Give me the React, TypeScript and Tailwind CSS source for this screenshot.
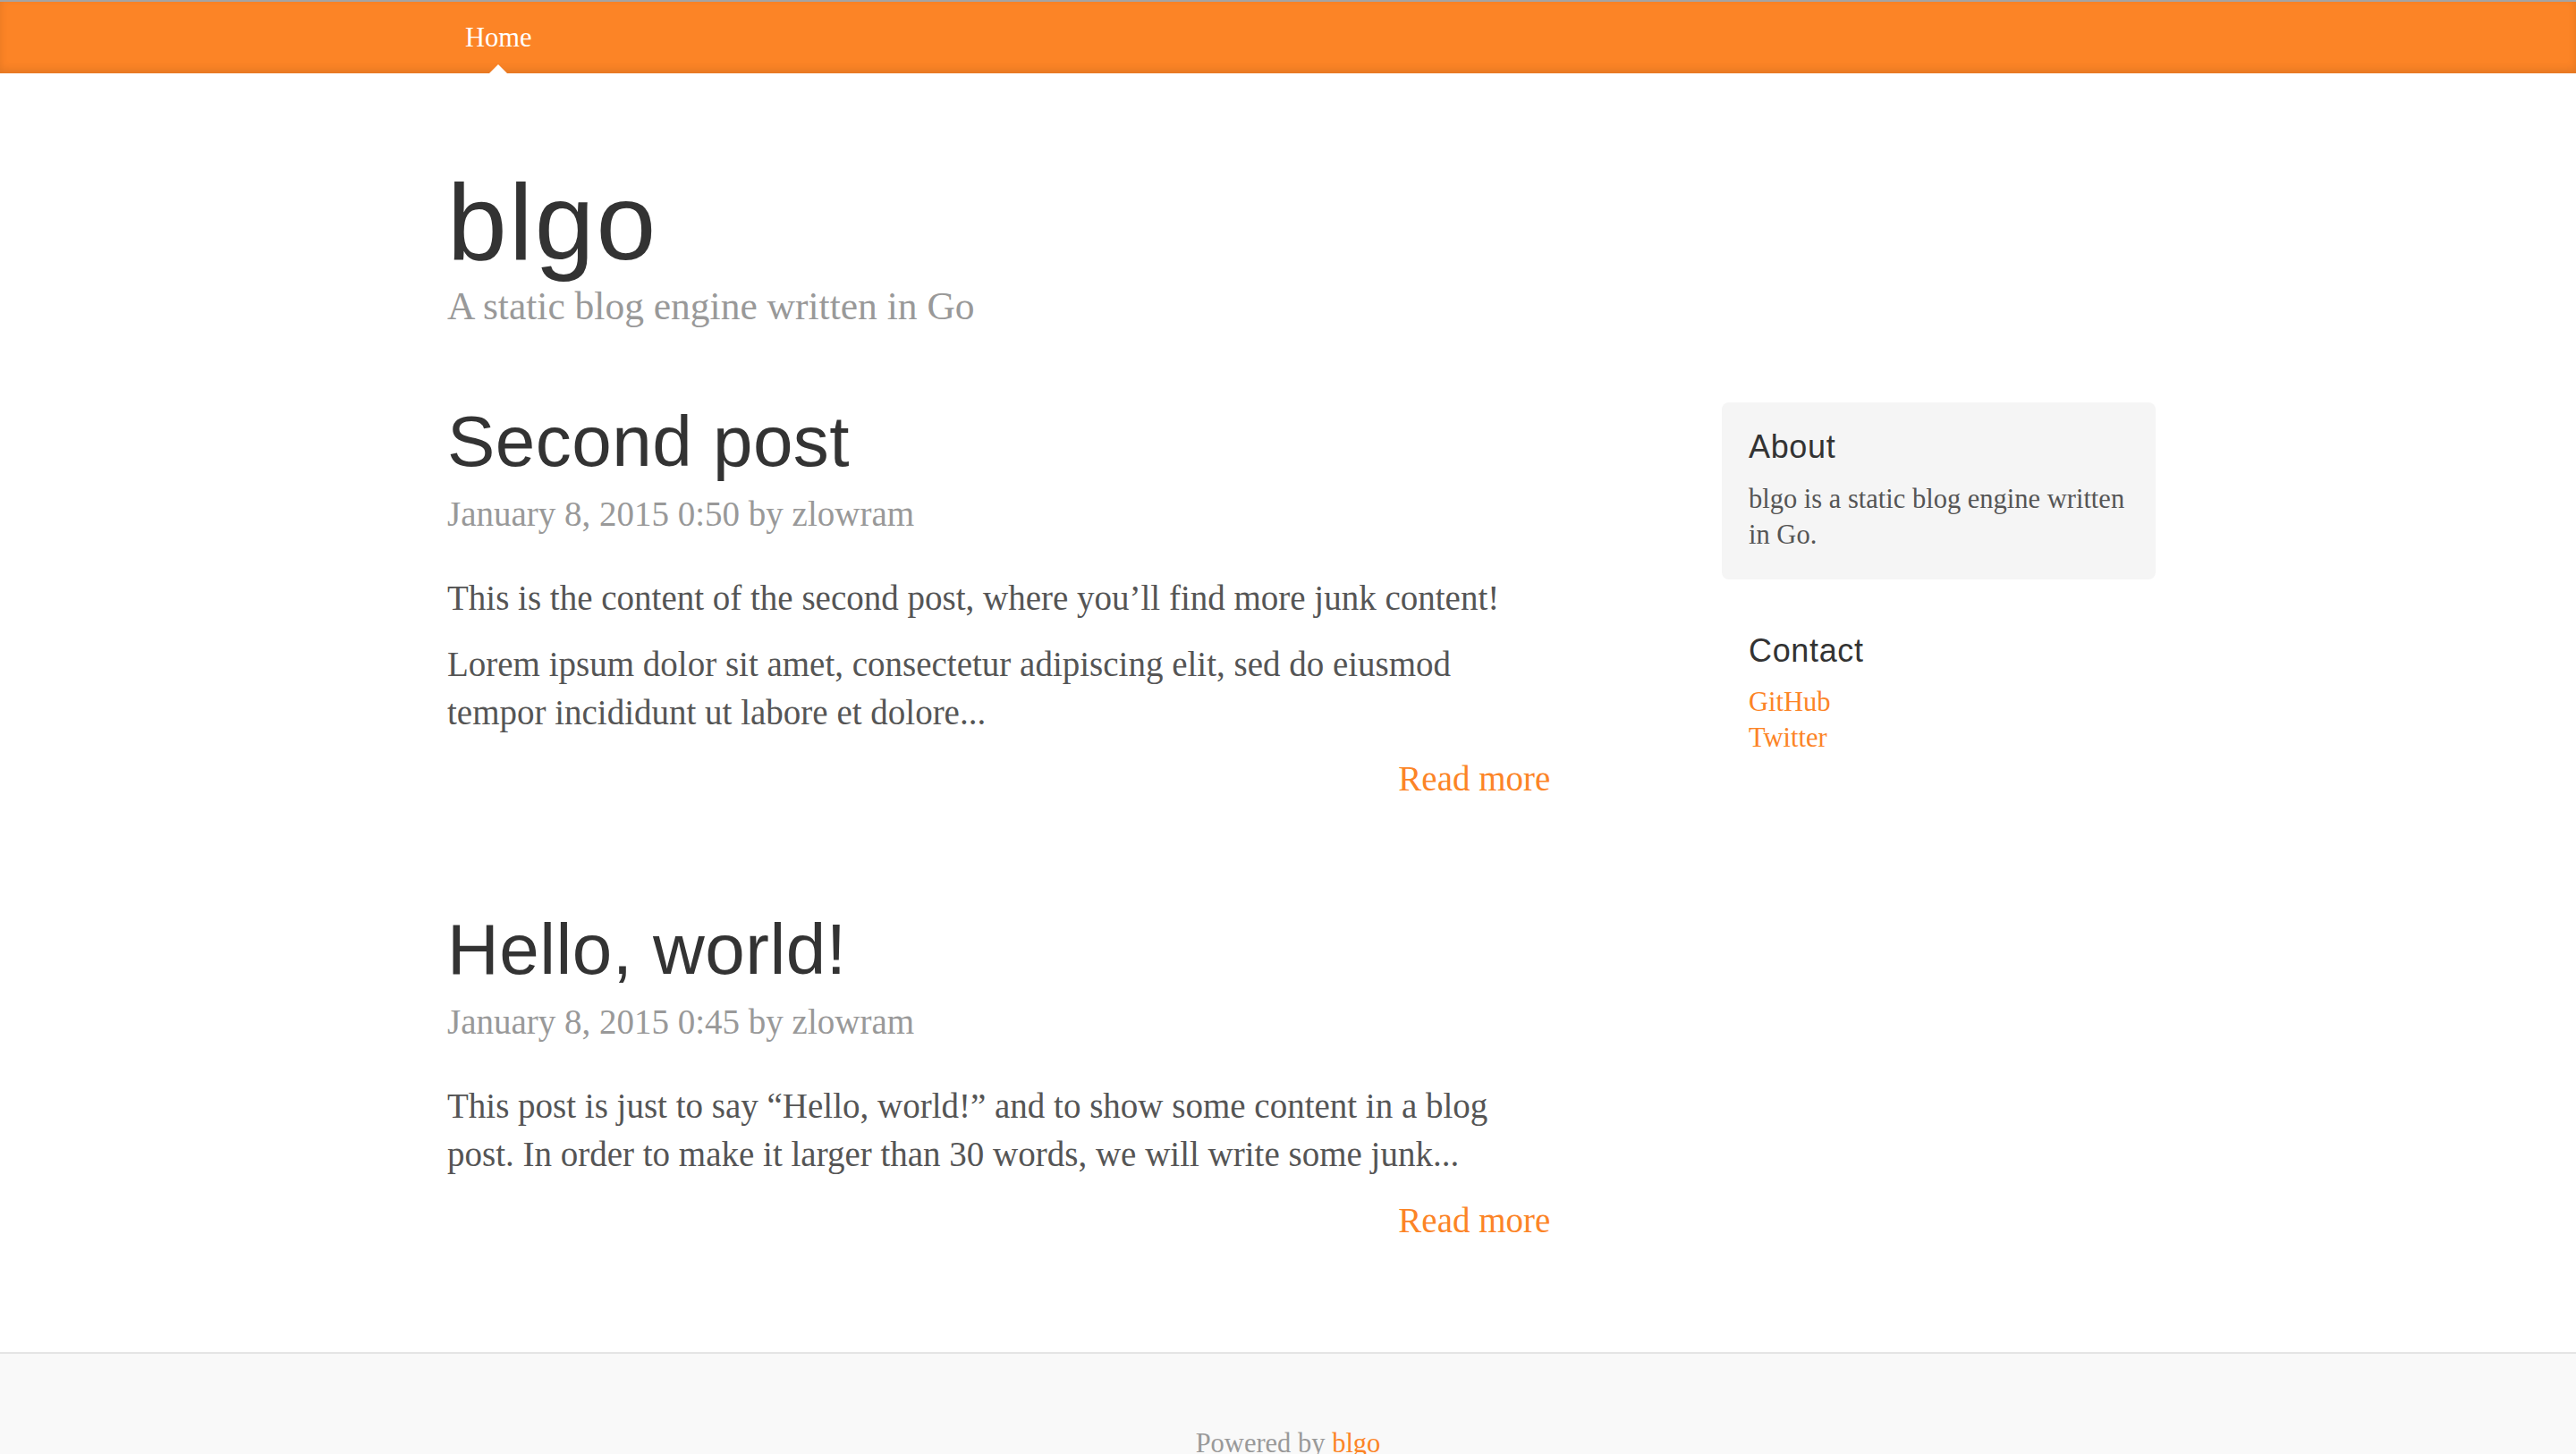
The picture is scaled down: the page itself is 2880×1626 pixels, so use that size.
import React from 'react';

type Post = {
  title: string;
  meta: string;
  paragraphs: React.ReactNode[];
};

const posts: Post[] = [
  {
    title: 'Second post',
    meta: 'January 8, 2015 0:50 by zlowram',
    paragraphs: [
      'This is the content of the second post, where you’ll find more junk content!',
      <>
        Lorem ipsum dolor sit amet, consectetur adipiscing elit, sed do eiusmod
        <br />
        tempor incididunt ut labore et dolore...
      </>,
    ],
  },
  {
    title: 'Hello, world!',
    meta: 'January 8, 2015 0:45 by zlowram',
    paragraphs: [
      <>
        This post is just to say “Hello, world!” and to show some content in a blog
        <br />
        post. In order to make it larger than 30 words, we will write some junk...
      </>,
    ],
  },
];

const BlogPost: React.FC<{ post: Post }> = ({ post }) => (
  <div className="mb-[120px]">
    <h2 className="mb-[10px] font-['Liberation_Sans',Arial,sans-serif] text-[80px] leading-[88px] tracking-[0.006em] text-[#333]">
      {post.title}
    </h2>
    <p className="mb-[40px] text-[#999]">{post.meta}</p>
    {post.paragraphs.map((p, i) => (
      <p key={i} className="mb-[20px]">
        {p}
      </p>
    ))}
    <p className="text-right">
      <a href="#" className="text-[#fc8426]">
        Read more
      </a>
    </p>
  </div>
);

export default function App() {
  return (
    <div className="min-h-screen bg-white font-['Liberation_Serif','Times_New_Roman',serif] text-[#555]">
      {/* masthead */}
      <div className="h-[2px] bg-[#a4a4a4]" />
      <div className="bg-[#fc8426] shadow-[inset_0_-4px_10px_rgba(0,0,0,0.1)]">
        <nav className="mx-auto w-[1940px] px-[30px]">
          <a href="#" className="relative inline-block p-[20px] text-[30.5px] leading-[40px] text-white">
            Home
            <span className="absolute bottom-0 left-1/2 -ml-[10px] h-0 w-0 border-x-[10px] border-b-[10px] border-x-transparent border-b-white" />
          </a>
        </nav>
      </div>

      <div className="mx-auto w-[1940px] px-[30px]">
        {/* header */}
        <div className="py-[40px]">
          <h1 className="mt-[60px] font-['Liberation_Sans',Arial,sans-serif] text-[120px] leading-[132px] tracking-[0.018em] text-[#333]">
            blgo
          </h1>
          <p className="mb-[40px] text-[43.5px] leading-[56px] text-[#999]">A static blog engine written in Go</p>
        </div>

        <div className="-mx-[30px] grid grid-cols-12">
          {/* main column */}
          <div className="col-span-8 px-[30px] text-[39px] leading-[54px]">
            {posts.map((post) => (
              <BlogPost key={post.title} post={post} />
            ))}
          </div>

          {/* sidebar */}
          <div className="col-span-3 col-start-10 px-[30px] text-[30.5px] leading-[40px]">
            <div className="-mx-[30px] mb-[30px] rounded-[8px] bg-[#f5f5f5] p-[30px]">
              <h4 className="mb-[18px] font-['Liberation_Sans',Arial,sans-serif] text-[36px] leading-[39.6px] tracking-[0.018em] text-[#333]">
                About
              </h4>
              <p>
                blgo is a static blog engine written
                <br />
                in Go.
              </p>
            </div>
            <div className="-mx-[30px] mb-[30px] p-[30px]">
              <h4 className="mb-[18px] font-['Liberation_Sans',Arial,sans-serif] text-[36px] leading-[39.6px] tracking-[0.018em] text-[#333]">
                Contact
              </h4>
              <ol className="mb-[20px]">
                <li>
                  <a href="#" className="text-[#fc8426]">
                    GitHub
                  </a>
                </li>
                <li>
                  <a href="#" className="text-[#fc8426]">
                    Twitter
                  </a>
                </li>
              </ol>
            </div>
          </div>
        </div>
      </div>

      {/* footer */}
      <footer className="border-t-2 border-[#e5e5e5] bg-[#f9f9f9] py-[80px] text-center text-[30.5px] leading-[40px] text-[#999]">
        <p>
          Powered by{' '}
          <a href="#" className="text-[#fc8426]">
            blgo
          </a>
        </p>
      </footer>
    </div>
  );
}
